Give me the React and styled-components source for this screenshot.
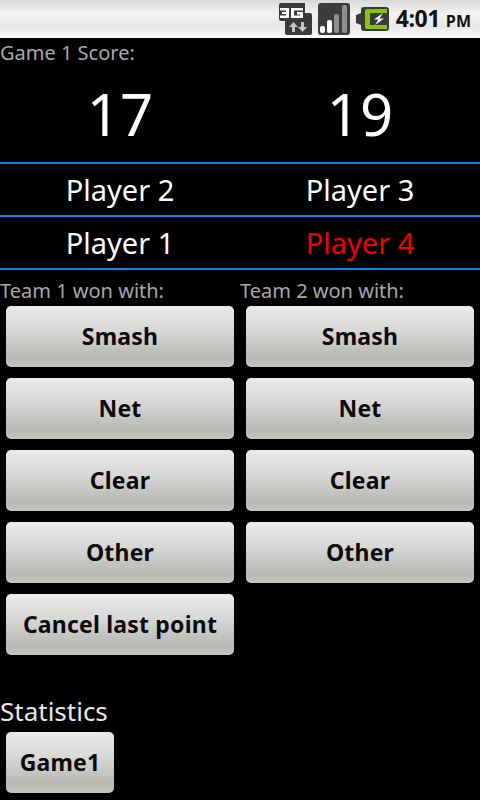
import styled, { createGlobalStyle } from "styled-components";

const GlobalStyle = createGlobalStyle`
  html, body {
    margin: 0;
    padding: 0;
    background: #000;
  }
  body {
    font-family: "Noto Sans", "Open Sans", "DejaVu Sans", sans-serif;
  }
`;

const Screen = styled.div`
  width: 480px;
  height: 800px;
  overflow: hidden;
  background: #000;
`;

const StatusBar = styled.div`
  height: 38px;
  display: flex;
  align-items: center;
  justify-content: flex-end;
  padding-right: 9px;
  box-sizing: border-box;
  background: linear-gradient(#d8d8d6 0%, #f2f2f0 35%, #e8e8e6 70%, #fbfbfb 100%);
`;

const Clock = styled.div`
  margin-left: 7px;
  font-family: "Open Sans", "Noto Sans", sans-serif;
  font-weight: 700;
  font-size: 23px;
  letter-spacing: -0.5px;
  line-height: 38px;
  color: #111;
  span {
    font-size: 16px;
    letter-spacing: 0;
    margin-left: 6px;
  }
`;

const StatusIcon = styled.svg`
  display: block;
  margin-left: ${(p) => p.$gap || 0}px;
`;

const ScoreTitle = styled.div`
  height: 29px;
  font-size: 20px;
  line-height: 29px;
  color: #a8a8a8;
`;

const ScoreRow = styled.div`
  display: grid;
  grid-template-columns: 240px 240px;
  height: 95px;
  font-size: 58px;
  line-height: 94px;
  text-align: center;
  color: #fff;
`;

const PlayerRow = styled.div`
  display: grid;
  grid-template-columns: 240px 240px;
  height: 51px;
  border-top: 2px solid #0a84f4;
  font-size: 29px;
  line-height: 51px;
  text-align: center;
`;

const PlayerName = styled.div`
  color: ${(p) => (p.$serving ? "#f00000" : "#fff")};
`;

const BottomLine = styled.div`
  height: 2px;
  background: #0a84f4;
`;

const Teams = styled.div`
  display: grid;
  grid-template-columns: 240px 240px;
  margin-top: 6px;
`;

const TeamLabel = styled.div`
  height: 30px;
  font-size: 20px;
  line-height: 29px;
  color: #a8a8a8;
`;

const ActionButton = styled.button`
  display: block;
  width: ${(p) => (p.$small ? "108px" : "228px")};
  height: 61px;
  margin: 0 6px 11px;
  padding: 0 0 2px;
  border: 0;
  border-radius: 5px;
  background: linear-gradient(#ebecea 0%, #d8d9d6 40%, #b7b9b5 85%, #c4c5c2 100%);
  font-family: "Noto Sans", "Open Sans", sans-serif;
  font-weight: 700;
  font-size: 23px;
  letter-spacing: 0.2px;
  color: #0b0b0b;
`;

const StatsTitle = styled.div`
  margin-top: 25px;
  height: 41px;
  font-size: 26px;
  line-height: 41px;
  color: #e8e8e8;
`;

const ThreeG = () => (
  <StatusIcon width="33" height="32" viewBox="0 0 33 32">
    <path d="M0 2a2 2 0 0 1 2-2h24v10h5a2 2 0 0 1 2 2v18a2 2 0 0 1-2 2H8a2 2 0 0 1-2-2V18H2a2 2 0 0 1-2-2z" fill="#3a3a3a" />
    <path d="M1 5h9v10H1v-2.500h6V11H3V9h4V7.500H1z" fill="#fff" />
    <path d="M24 5H12v10h12V9h-6v2.500h3v1h-6v-5h9z" fill="#fff" />
    <path d="M13 29v-5h-3l4.500-5 4.500 5h-3v5z" fill="#c4c4c4" />
    <path d="M22 19v5h-3l4.500 5 4.500-5h-3v-5z" fill="#c4c4c4" />
  </StatusIcon>
);

const Signal = () => (
  <StatusIcon $gap={6} width="32" height="32" viewBox="0 0 32 32">
    <rect width="32" height="32" rx="3" fill="#3c3c3c" />
    <rect x="2" y="23" width="5" height="7" rx="2" fill="#fff" />
    <rect x="9" y="17" width="5" height="13" rx="2" fill="#fff" />
    <rect x="16" y="11" width="5" height="19" rx="2" fill="#8e8e8e" />
    <rect x="24" y="2" width="5" height="28" rx="2" fill="#8e8e8e" />
  </StatusIcon>
);

const Battery = () => (
  <StatusIcon $gap={6} width="33" height="24" viewBox="0 0 33 24">
    <path d="M0 8l5-2V3a3 3 0 0 1 3-3h22a3 3 0 0 1 3 3v18a3 3 0 0 1-3 3H8a3 3 0 0 1-3-3v-3l-5-2z" fill="#3a3a3a" />
    <path d="M9 4a2 2 0 0 1 2-2h20v4H14v12h17v4H11a2 2 0 0 1-2-2z" fill="#8cc30a" />
    <path d="M27 6l-9 6.500h4.500L19 18l9-6.500h-4.500z" fill="#fff" />
  </StatusIcon>
);

const TeamColumn = ({ team }) => (
  <div>
    <TeamLabel>Team {team} won with:</TeamLabel>
    <ActionButton>Smash</ActionButton>
    <ActionButton>Net</ActionButton>
    <ActionButton>Clear</ActionButton>
    <ActionButton>Other</ActionButton>
    {team === 1 && <ActionButton>Cancel last point</ActionButton>}
  </div>
);

export default function App() {
  return (
    <Screen>
      <GlobalStyle />
      <StatusBar>
        <ThreeG />
        <Signal />
        <Battery />
        <Clock>
          4:01<span>PM</span>
        </Clock>
      </StatusBar>
      <ScoreTitle>Game 1 Score:</ScoreTitle>
      <ScoreRow>
        <div>17</div>
        <div>19</div>
      </ScoreRow>
      <PlayerRow>
        <PlayerName>Player 2</PlayerName>
        <PlayerName>Player 3</PlayerName>
      </PlayerRow>
      <PlayerRow>
        <PlayerName>Player 1</PlayerName>
        <PlayerName $serving>Player 4</PlayerName>
      </PlayerRow>
      <BottomLine />
      <Teams>
        <TeamColumn team={1} />
        <TeamColumn team={2} />
      </Teams>
      <StatsTitle>Statistics</StatsTitle>
      <ActionButton $small>Game1</ActionButton>
    </Screen>
  );
}
